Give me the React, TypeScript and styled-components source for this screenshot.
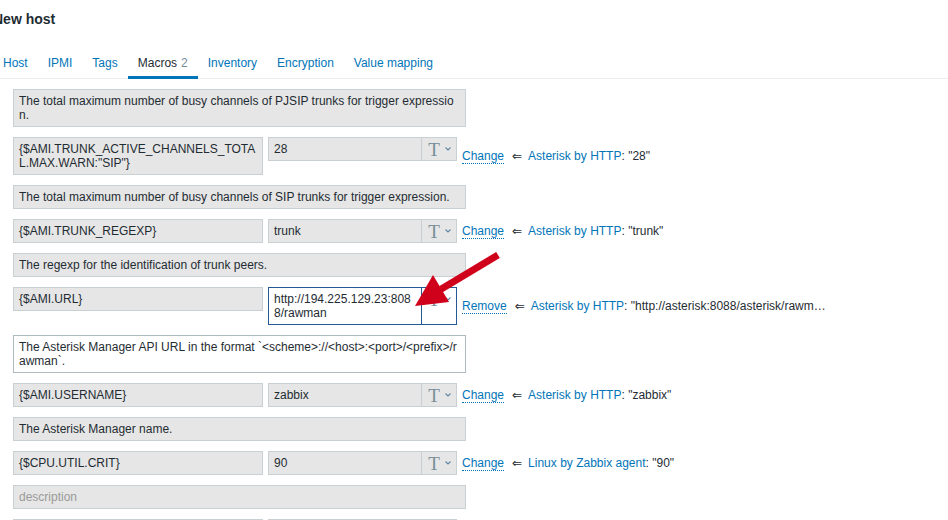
import React from "react";
import styled, { createGlobalStyle, css } from "styled-components";

const GlobalStyle = createGlobalStyle`
  html, body {
    margin: 0;
    padding: 0;
    overflow: hidden;
    background: #ffffff;
  }
  body {
    font-family: Arial, "Liberation Sans", Helvetica, sans-serif;
    font-size: 12px;
    color: #1f2c33;
  }
`;

const Page = styled.div`
  position: relative;
  width: 948px;
  height: 520px;
  overflow: hidden;
`;

const Header = styled.header`
  height: 38px;
  display: flex;
  align-items: center;
`;

const Title = styled.h1`
  margin: 0 0 0 -7px;
  font-size: 14px;
  font-weight: bold;
  color: #1f2c33;
  white-space: nowrap;
`;

const TabList = styled.nav`
  margin-top: 10px;
  display: flex;
  border-bottom: 1px solid #ebeef0;
  margin-left: -7px;
`;

const Tab = styled.a<{ $active?: boolean }>`
  box-sizing: border-box;
  height: 31px;
  padding: 2px 10px 0;
  line-height: 26px;
  margin-bottom: -1px;
  border-bottom: 3px solid transparent;
  color: #0275b8;
  text-decoration: none;
  white-space: nowrap;
  cursor: pointer;
  ${(p) =>
    p.$active &&
    css`
      color: #1f2c33;
      border-bottom-color: #0275b8;
    `}
`;

const Count = styled.span`
  color: #768d99;
  margin-left: 4px;
`;

const Content = styled.div`
  padding: 10px 0 0 13px;
  display: flex;
  flex-direction: column;
  gap: 10px;
`;

const MacroRow = styled.div`
  display: flex;
  align-items: flex-start;
  gap: 5px;
`;

const Field = styled.div<{ $width: number; $editable?: boolean; $focused?: boolean; $placeholder?: boolean }>`
  box-sizing: border-box;
  width: ${(p) => p.$width}px;
  min-height: 24px;
  padding: 4px 5px;
  line-height: 14px;
  font-size: 12px;
  border: 1px solid #c9d0d4;
  background: #e6e6e6;
  color: ${(p) => (p.$placeholder ? "#9a9a9a" : "#1f2c33")};
  word-break: break-all;
  white-space: pre-wrap;
  ${(p) =>
    p.$editable &&
    css`
      background: #ffffff;
      border-color: #acbbc2;
    `}
  ${(p) =>
    p.$focused &&
    css`
      background: #ffffff;
      border-color: #235a93;
    `}
`;

const ValueGroup = styled.div`
  display: flex;
  align-items: stretch;
  width: 189px;
`;

const TypeButton = styled.div<{ $focused?: boolean }>`
  box-sizing: border-box;
  width: 36px;
  margin-left: -1px;
  min-height: 24px;
  border: 1px solid #c9d0d4;
  background: #e6e6e6;
  display: flex;
  align-items: flex-start;
  justify-content: center;
  padding: 3px 0 0 1px;
  gap: 5px;
  ${(p) =>
    p.$focused &&
    css`
      background: #ffffff;
      border-color: #235a93;
    `}
`;

const TGlyph = styled.span`
  font-family: "Liberation Serif", "Times New Roman", serif;
  font-size: 19px;
  line-height: 18px;
  color: #768d99;
`;

const Chevron = styled.svg`
  margin-top: 6px;
`;

const Actions = styled.div`
  align-self: center;
  white-space: nowrap;
  display: flex;
  align-items: baseline;
`;

const ActionLink = styled.a`
  color: #0275b8;
  text-decoration: none;
  border-bottom: 1px dotted #0275b8;
  cursor: pointer;
`;

const Inherit = styled.span`
  font-family: "DejaVu Sans", sans-serif;
  color: #1f2c33;
  margin: 0 6px 0 8px;
`;

const TemplateLink = styled.a`
  color: #0275b8;
  text-decoration: none;
`;

const InheritedValue = styled.span`
  color: #1f2c33;
`;

const Overlay = styled.svg`
  position: absolute;
  left: 0;
  top: 0;
  pointer-events: none;
`;

type Macro = {
  macro: string;
  value: string;
  desc: string;
  action: "Change" | "Remove";
  template: string;
  inherited: string;
  focused?: boolean;
};

const macros: Macro[] = [
  {
    macro: '{$AMI.TRUNK_ACTIVE_CHANNELS_TOTAL.MAX.WARN:"SIP"}',
    value: "28",
    desc: "The total maximum number of busy channels of SIP trunks for trigger expression.",
    action: "Change",
    template: "Asterisk by HTTP",
    inherited: '"28"',
  },
  {
    macro: "{$AMI.TRUNK_REGEXP}",
    value: "trunk",
    desc: "The regexp for the identification of trunk peers.",
    action: "Change",
    template: "Asterisk by HTTP",
    inherited: '"trunk"',
  },
  {
    macro: "{$AMI.URL}",
    value: "http://194.225.129.23:8088/rawman",
    desc: "The Asterisk Manager API URL in the format `<scheme>://<host>:<port>/<prefix>/rawman`.",
    action: "Remove",
    template: "Asterisk by HTTP",
    inherited: '"http://asterisk:8088/asterisk/rawm\u2026',
    focused: true,
  },
  {
    macro: "{$AMI.USERNAME}",
    value: "zabbix",
    desc: "The Asterisk Manager name.",
    action: "Change",
    template: "Asterisk by HTTP",
    inherited: '"zabbix"',
  },
  {
    macro: "{$CPU.UTIL.CRIT}",
    value: "90",
    desc: "",
    action: "Change",
    template: "Linux by Zabbix agent",
    inherited: '"90"',
  },
  {
    macro: "{$CPU.UTIL.WARN}",
    value: "80",
    desc: "",
    action: "Change",
    template: "Linux by Zabbix agent",
    inherited: '"80"',
  },
];

const tabs = ["Host", "IPMI", "Tags", "Macros", "Inventory", "Encryption", "Value mapping"];

function MacroItem({ m }: { m: Macro }) {
  return (
    <>
      <MacroRow>
        <Field $width={250}>{m.macro}</Field>
        <ValueGroup>
          <Field $width={154} $focused={m.focused}>
            {m.value}
          </Field>
          <TypeButton $focused={m.focused}>
            <TGlyph>T</TGlyph>
            <Chevron width="6" height="4" viewBox="0 0 6 4">
              <polyline points="0.5,0.5 3,3 5.5,0.5" fill="none" stroke="#5f87a8" strokeWidth="1.1" />
            </Chevron>
          </TypeButton>
        </ValueGroup>
        <Actions>
          <ActionLink>{m.action}</ActionLink>
          <Inherit>⇐</Inherit>
          <TemplateLink>{m.template}</TemplateLink>
          <InheritedValue>: {m.inherited}</InheritedValue>
        </Actions>
      </MacroRow>
      <MacroRow>
        <Field $width={453} $editable={m.focused} $placeholder={!m.desc}>
          {m.desc || "description"}
        </Field>
      </MacroRow>
    </>
  );
}

export default function App() {
  return (
    <Page>
      <GlobalStyle />
      <Header>
        <Title>New host</Title>
      </Header>
      <TabList>
        {tabs.map((t) => (
          <Tab key={t} $active={t === "Macros"}>
            {t}
            {t === "Macros" && <Count>2</Count>}
          </Tab>
        ))}
      </TabList>
      <Content>
        <MacroRow>
          <Field $width={453}>
            The total maximum number of busy channels of PJSIP trunks for trigger expression.
          </Field>
        </MacroRow>
        {macros.map((m) => (
          <MacroItem key={m.macro} m={m} />
        ))}
      </Content>
      <Overlay width="948" height="520" viewBox="0 0 948 520">
        <line x1="438" y1="291" x2="498" y2="255" stroke="#d0021b" strokeWidth="7" />
        <polygon points="415,306 433,275 449,302" fill="#d0021b" />
      </Overlay>
    </Page>
  );
}
